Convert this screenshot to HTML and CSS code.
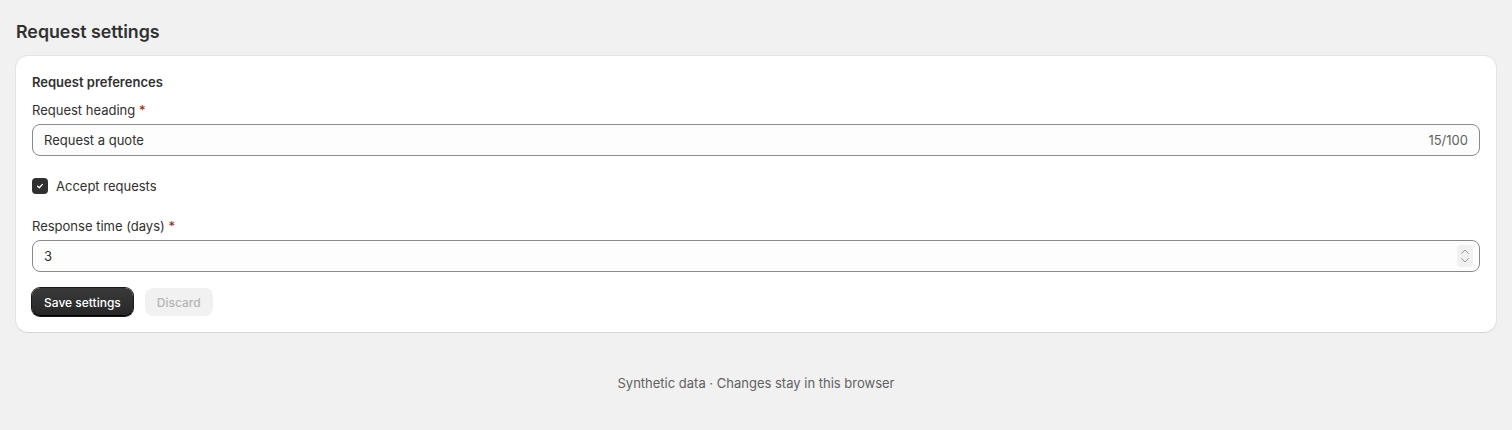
FILE: index.html
```html
<!DOCTYPE html>
<html lang="en">
<head>
    <meta charset="UTF-8">
    <meta name="viewport" content="width=device-width, initial-scale=1.0">
    <title>Request settings</title>
    <link rel="stylesheet" href="styles.css">
</head>
<body>

    <div class="page">
        <h1 class="page-title">Request settings</h1>

        <div class="card">
            <h2 class="card-title">Request preferences</h2>

            <div class="field">
                <label class="label" for="heading">Request heading <span class="req">*</span></label>
                <div class="input-wrap">
                    <input class="input" id="heading" type="text" value="Request a quote" maxlength="100">
                    <span class="counter">15/100</span>
                </div>
            </div>

            <label class="check-row">
                <span class="checkbox">
                    <svg width="10" height="10" viewBox="0 0 10 10"><path d="M2.6 5.2 4.3 6.8 7.4 3.4" fill="none" stroke="#fff" stroke-width="1.3" stroke-linecap="round" stroke-linejoin="round"/></svg>
                </span>
                <span class="check-text">Accept requests</span>
            </label>

            <div class="field field-days">
                <label class="label" for="days">Response time (days) <span class="req">*</span></label>
                <div class="input-wrap">
                    <input class="input" id="days" type="text" value="3">
                    <span class="spinner">
                        <svg width="16" height="22" viewBox="0 0 16 22">
                            <path d="M4.5 8.5 8 5 11.5 8.5" fill="none" stroke="#9a9a9a" stroke-width="1" stroke-linecap="round" stroke-linejoin="round"/>
                            <path d="M4.5 13.5 8 17 11.5 13.5" fill="none" stroke="#9a9a9a" stroke-width="1" stroke-linecap="round" stroke-linejoin="round"/>
                        </svg>
                    </span>
                </div>
            </div>

            <div class="actions">
                <button class="btn btn-primary">Save settings</button>
                <button class="btn btn-disabled" disabled>Discard</button>
            </div>
        </div>

        <p class="footer">Synthetic data · Changes stay in this browser</p>
    </div>

</body>
</html>
```

FILE: styles.css
```css
body {
    margin: 0;
    background-color: #f1f1f1;
    font-family: Inter, "Noto Sans", sans-serif;
    color: #303030;
    font-size: 13px;
    line-height: 20px;
}

.page {
    padding: 20px 16px;
}

.page-title {
    margin: 0 0 12px;
    font-size: 17.8px;
    line-height: 24px;
    font-weight: 600;
    color: #303030;
}

.card {
    background-color: #fff;
    border-radius: 12px;
    padding: 16px;
    box-shadow: 0 1px 0 rgba(26, 26, 26, 0.07), 0 0 0 1px rgba(26, 26, 26, 0.06);
}

.card-title {
    margin: 0 0 8px;
    font-size: 13px;
    line-height: 20px;
    font-weight: 600;
}

.label {
    display: block;
    margin-bottom: 4px;
}

.req {
    color: #8e1f0b;
}

.input-wrap {
    position: relative;
}

.input {
    box-sizing: border-box;
    width: 100%;
    height: 32px;
    padding: 0 11px;
    border: 1px solid #8a8a8a;
    border-radius: 8px;
    font-family: inherit;
    font-size: 13px;
    color: #303030;
    background-color: #fdfdfd;
    outline: none;
}

.counter {
    position: absolute;
    right: 12px;
    top: 6px;
    color: #616161;
}

.spinner {
    position: absolute;
    right: 7px;
    top: 5px;
    width: 16px;
    height: 22px;
    border-radius: 4px;
    background-color: #f1f1f1;
    display: flex;
}

.check-row {
    display: flex;
    align-items: center;
    gap: 8px;
    margin-top: 20px;
}

.checkbox {
    width: 16px;
    height: 16px;
    border-radius: 4px;
    background-color: #303030;
    display: flex;
    align-items: center;
    justify-content: center;
}

.field-days {
    margin-top: 20px;
}

.actions {
    display: flex;
    gap: 12px;
    margin-top: 16px;
}

.btn {
    height: 28px;
    padding: 0 12px;
    border: none;
    border-radius: 8px;
    font-family: inherit;
    font-size: 12px;
    font-weight: 500;
}

.btn-primary {
    background: linear-gradient(#3a3a3a, #262626);
    color: #fff;
    box-shadow: inset 0 -1px 0 #000, 0 0 0 1px #1a1a1a;
}

.btn-disabled {
    background-color: #f1f1f1;
    color: #b5b5b5;
}

.footer {
    margin: 41px 0 0;
    text-align: center;
    color: #616161;
}
```
